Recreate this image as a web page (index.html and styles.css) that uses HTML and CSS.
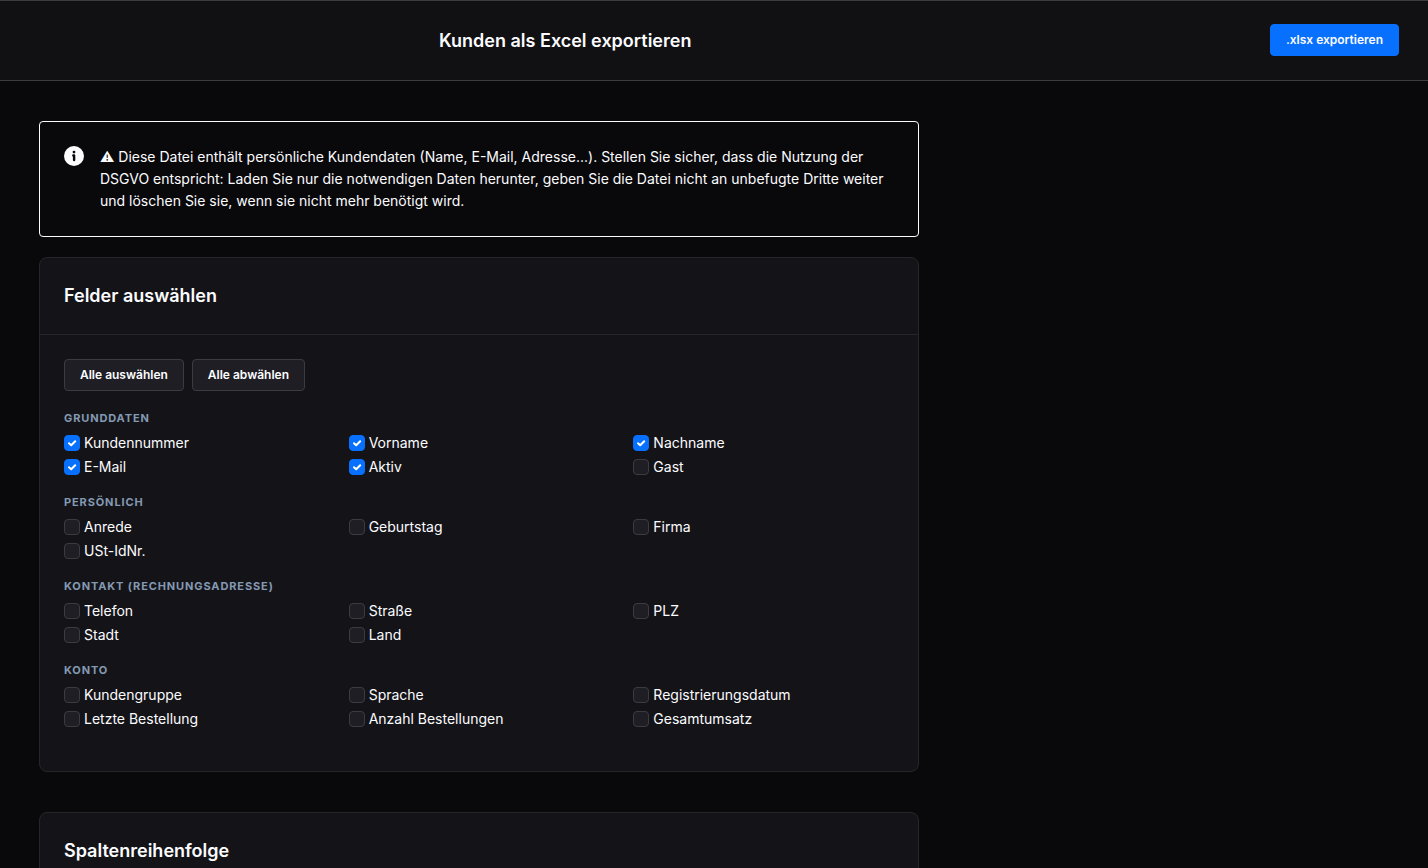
FILE: index.html
```
<!DOCTYPE html>
<html lang="de">
    <head>
        <meta charset="utf-8">
        <title>Kunden als Excel exportieren</title>
        <link rel="stylesheet" href="styles.css">
    </head>
    <body>
        <header class="page-header">
            <h1 class="page-title">Kunden als Excel exportieren</h1>
            <button type="button" class="button button-primary">.xlsx exportieren</button>
        </header>

        <main class="content">
            <div class="alert" role="alert">
                <svg class="alert-icon" viewBox="0 0 20 20" aria-hidden="true">
                    <circle cx="10" cy="10" r="10" fill="#fcfcff"/>
                    <circle cx="10" cy="6.1" r="1.4" fill="#09090b"/>
                    <path d="M9.3 9.4h.8v4.6" fill="none" stroke="#09090b" stroke-width="2.4" stroke-linecap="round" stroke-linejoin="round"/>
                </svg>
                <p class="alert-text">⚠ Diese Datei enthält persönliche Kundendaten (Name, E-Mail, Adresse...). Stellen Sie sicher, dass die Nutzung der DSGVO entspricht: Laden Sie nur die notwendigen Daten herunter, geben Sie die Datei nicht an unbefugte Dritte weiter und löschen Sie sie, wenn sie nicht mehr benötigt wird.</p>
            </div>

            <section class="card">
                <h2 class="card-title">Felder auswählen</h2>
                <div class="card-body">
                    <div class="actions">
                        <button type="button" class="button">Alle auswählen</button>
                        <button type="button" class="button">Alle abwählen</button>
                    </div>

                    <fieldset class="group">
                        <legend class="group-title">Grunddaten</legend>
                        <div class="fields">
                            <label class="field"><input type="checkbox" class="check" checked>Kundennummer</label>
                            <label class="field"><input type="checkbox" class="check" checked>Vorname</label>
                            <label class="field"><input type="checkbox" class="check" checked>Nachname</label>
                            <label class="field"><input type="checkbox" class="check" checked>E-Mail</label>
                            <label class="field"><input type="checkbox" class="check" checked>Aktiv</label>
                            <label class="field"><input type="checkbox" class="check">Gast</label>
                        </div>
                    </fieldset>

                    <fieldset class="group">
                        <legend class="group-title">Persönlich</legend>
                        <div class="fields">
                            <label class="field"><input type="checkbox" class="check">Anrede</label>
                            <label class="field"><input type="checkbox" class="check">Geburtstag</label>
                            <label class="field"><input type="checkbox" class="check">Firma</label>
                            <label class="field"><input type="checkbox" class="check">USt-IdNr.</label>
                        </div>
                    </fieldset>

                    <fieldset class="group">
                        <legend class="group-title">Kontakt (Rechnungsadresse)</legend>
                        <div class="fields">
                            <label class="field"><input type="checkbox" class="check">Telefon</label>
                            <label class="field"><input type="checkbox" class="check">Straße</label>
                            <label class="field"><input type="checkbox" class="check">PLZ</label>
                            <label class="field"><input type="checkbox" class="check">Stadt</label>
                            <label class="field"><input type="checkbox" class="check">Land</label>
                        </div>
                    </fieldset>

                    <fieldset class="group">
                        <legend class="group-title">Konto</legend>
                        <div class="fields">
                            <label class="field"><input type="checkbox" class="check">Kundengruppe</label>
                            <label class="field"><input type="checkbox" class="check">Sprache</label>
                            <label class="field"><input type="checkbox" class="check">Registrierungsdatum</label>
                            <label class="field"><input type="checkbox" class="check">Letzte Bestellung</label>
                            <label class="field"><input type="checkbox" class="check">Anzahl Bestellungen</label>
                            <label class="field"><input type="checkbox" class="check">Gesamtumsatz</label>
                        </div>
                    </fieldset>
                </div>
            </section>

            <section class="card">
                <h2 class="card-title">Spaltenreihenfolge</h2>
            </section>
        </main>
    </body>
</html>
```
FILE: styles.css
```
*
{
    box-sizing: border-box;
}

body
{
    margin: 0;
    height: 100vh;
    overflow: hidden;
    background: #09090b;
    color: #fcfcff;
    font: 14px/22px Inter, sans-serif;
}

.page-header
{
    display: grid;
    grid-template-columns: 1fr auto;
    align-items: end;
    padding: 23px 29px 24px 439px;
    border-top: 1px solid #3c3c40;
    border-bottom: 1px solid #3c3c40;
    background: #111113;
}

.page-title
{
    margin: 0;
    font-size: 18px;
    font-weight: 600;
    line-height: 30px;
}

.button
{
    height: 32px;
    padding: 0 15px;
    border: 1px solid #3c3c40;
    border-radius: 4px;
    background: #1e1e24;
    color: #fcfcff;
    font: 600 12px/30px Inter, sans-serif;
}

.button-primary
{
    border-color: #0870ff;
    background: #0870ff;
}

.content
{
    display: flex;
    flex-direction: column;
    max-width: 960px;
    padding: 40px 41px 40px 39px;
}

.alert
{
    display: flex;
    gap: 16px;
    margin-bottom: 20px;
    padding: 24px;
    border: 1px solid #fcfcff;
    border-radius: 4px;
}

.alert-icon
{
    flex: none;
    width: 20px;
    height: 20px;
}

.alert-text
{
    margin: 0;
}

.card
{
    margin-bottom: 40px;
    border: 1px solid #26262a;
    border-radius: 8px;
    background: #141418;
}

.card-title
{
    margin: 0;
    padding: 24px;
    border-bottom: 1px solid #26262a;
    font-size: 18px;
    font-weight: 600;
    line-height: 28px;
}

.card-body
{
    padding: 24px;
}

.actions
{
    display: flex;
    gap: 8px;
    margin-bottom: 20px;
}

.group
{
    margin: 0 0 16px;
    padding: 0;
    border: 0;
}

.group-title
{
    margin-bottom: 6px;
    padding: 0;
    color: #8499b3;
    font-size: 11px;
    font-weight: 700;
    line-height: 14px;
    letter-spacing: 0.08em;
    text-transform: uppercase;
}

.fields
{
    display: grid;
    grid-template-columns: repeat(3, 1fr);
    column-gap: 24px;
}

.field
{
    display: flex;
    align-items: center;
    gap: 4px;
    line-height: 24px;
}

.check
{
    appearance: none;
    flex: none;
    width: 16px;
    height: 16px;
    margin: 0;
    border: 1px solid #3c3c40;
    border-radius: 4px;
    background: #1e1e24;
}

.check:checked
{
    border-color: #0870ff;
    background: #0870ff url("data:image/svg+xml,%3Csvg xmlns='http://www.w3.org/2000/svg' viewBox='0 0 14 14'%3E%3Cpath d='M4 7.2l2.2 2L10.2 5.2' fill='none' stroke='%23fff' stroke-width='2' stroke-linecap='round' stroke-linejoin='round'/%3E%3C/svg%3E") center / 14px no-repeat;
}
```
